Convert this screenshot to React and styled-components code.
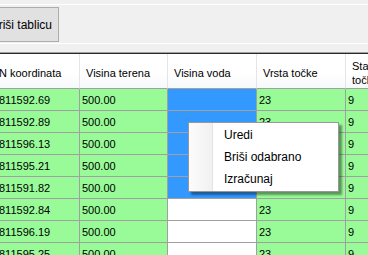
import React from 'react';
import styled, { createGlobalStyle } from 'styled-components';

const Global = createGlobalStyle`
  html, body { margin: 0; padding: 0; background: #f0f0f0; overflow: hidden; }
  body { font-family: "Liberation Sans", Arial, sans-serif; }
`;

const Window = styled.div`
  position: relative;
  width: 368px;
  height: 255px;
  overflow: hidden;
  display: flex;
  flex-direction: column;
  background: #f0f0f0;
`;

const TopEdge = styled.div`
  flex: none;
  height: 5px;
  box-sizing: border-box;
  border-bottom: 1px solid #ffffff;
`;

const Toolbar = styled.div`
  flex: none;
  height: 39px;
  box-sizing: border-box;
  border-bottom: 1px solid #ffffff;
  display: flex;
  align-items: flex-start;
  padding-top: 2px;
  margin-left: -22px;
`;

const Button = styled.button`
  width: 81px;
  height: 35px;
  box-sizing: border-box;
  border: 1px solid #adadad;
  background: #e1e1e1;
  color: #000;
  font-family: "Liberation Sans", Arial, sans-serif;
  font-size: 12px;
  padding: 0 6px 0 0;
  white-space: nowrap;
  display: flex;
  align-items: center;
  justify-content: flex-end;
`;

const Spacer = styled.div`
  flex: none;
  height: 8px;
`;

const GridFrame = styled.div`
  flex: none;
  border-top: 1px solid #a0a0a0;
`;

const Grid = styled.div`
  border-top: 1px solid #2a2a2a;
  display: grid;
  grid-template-columns: 87px 88px 89px 89px 89px;
  margin-left: -7px;
  width: max-content;
  font-size: 11px;
  color: #000;
`;

const HeaderCell = styled.div`
  height: 35px;
  box-sizing: border-box;
  padding: 3px 4px 0 6px;
  display: flex;
  align-items: center;
  line-height: 14px;
  background: linear-gradient(to bottom, #ffffff 0%, #ffffff 55%, #f7f8fa 100%);
  border-right: 1px solid #e5e5e5;
  border-bottom: 1px solid #a0a0a0;
  overflow: hidden;
`;

const Cell = styled.div`
  height: 22px;
  box-sizing: border-box;
  padding-left: ${(p) => (p.$lead ? '6px' : '2px')};
  display: flex;
  align-items: center;
  white-space: nowrap;
  overflow: hidden;
  background: ${(p) => (p.$tone === 'sel' ? '#3399ff' : p.$tone === 'empty' ? '#ffffff' : '#98fb98')};
  border-right: 1px solid #a0a0a0;
  border-bottom: 1px solid #a0a0a0;
`;

const Menu = styled.div`
  position: absolute;
  left: 188px;
  top: 122px;
  width: 151px;
  box-sizing: border-box;
  border: 1px solid #979797;
  padding: 1px 0;
  display: flex;
  flex-direction: column;
  background: linear-gradient(
    to right,
    #fcfcfc 0px,
    #f1f1f1 23px,
    #e3e3e3 23px,
    #e3e3e3 24px,
    #ffffff 24px,
    #ffffff 100%
  );
  box-shadow: 3px 3px 2px rgba(0, 0, 0, 0.4);
  font-family: "Liberation Sans", Arial, sans-serif;
  font-size: 12px;
  color: #000;
`;

const MenuItem = styled.div`
  height: 22px;
  display: flex;
  align-items: center;
  padding-left: 35px;
  white-space: nowrap;
`;

const headers = ['N koordinata', 'Visina terena', 'Visina voda', 'Vrsta točke', 'Stabilizacija točke'];

const rows = [
  ['811592.69', '500.00', '23', '9'],
  ['811592.89', '500.00', '23', '9'],
  ['811596.13', '500.00', '23', '9'],
  ['811595.21', '500.00', '23', '9'],
  ['811591.82', '500.00', '23', '9'],
  ['811592.84', '500.00', '23', '9'],
  ['811596.19', '500.00', '23', '9'],
  ['811595.25', '500.00', '23', '9'],
];

export default function App() {
  return (
    <>
      <Global />
      <Window>
        <TopEdge />
        <Toolbar>
          <Button>Briši tablicu</Button>
        </Toolbar>
        <Spacer />
        <GridFrame>
          <Grid>
            {headers.map((h) => (
              <HeaderCell key={h}>{h}</HeaderCell>
            ))}
            {rows.map((r, i) => (
              <React.Fragment key={i}>
                <Cell $lead>{r[0]}</Cell>
                <Cell>{r[1]}</Cell>
                <Cell $tone={i < 5 ? 'sel' : 'empty'} />
                <Cell>{r[2]}</Cell>
                <Cell>{r[3]}</Cell>
              </React.Fragment>
            ))}
          </Grid>
        </GridFrame>
        <Menu>
          <MenuItem>Uredi</MenuItem>
          <MenuItem>Briši odabrano</MenuItem>
          <MenuItem>Izračunaj</MenuItem>
        </Menu>
      </Window>
    </>
  );
}
